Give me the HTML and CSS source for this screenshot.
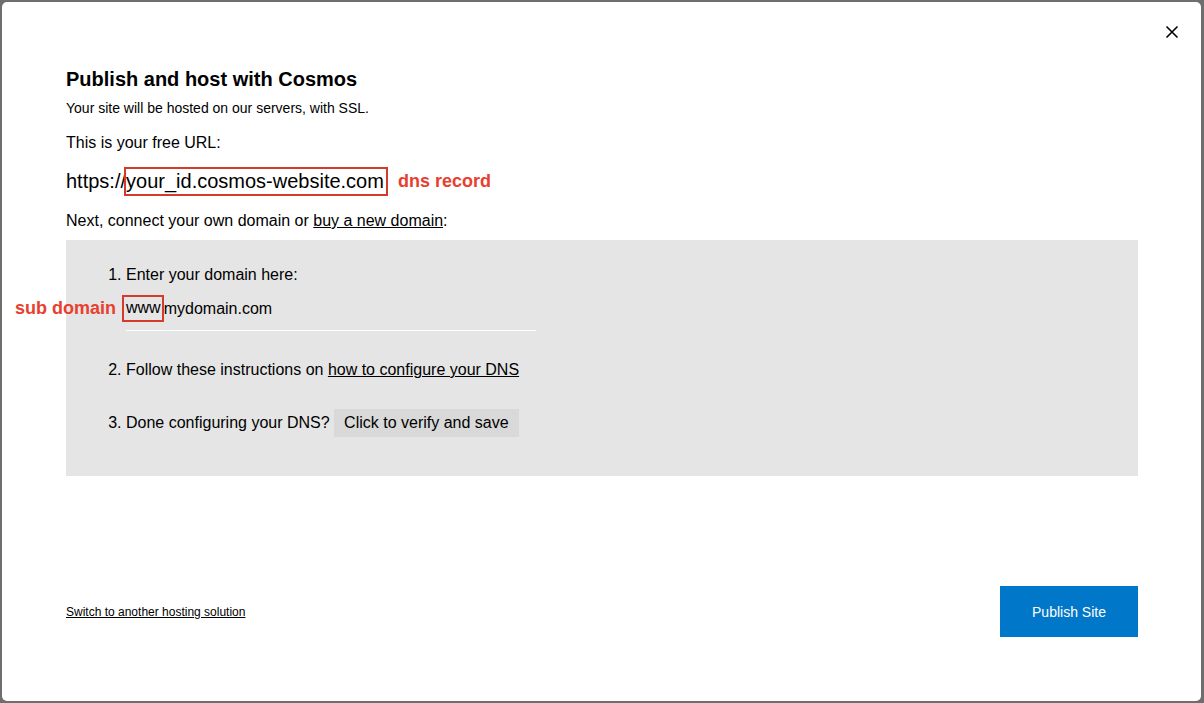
FILE: index.html
```html
<!DOCTYPE html>
<html lang="en">
<head>
  <meta charset="UTF-8" />
  <meta name="viewport" content="width=device-width, initial-scale=1.0"/>
  <title>Publish and host with Cosmos</title>
  <link rel="stylesheet" href="styles.css">
</head>
<body>
  <div class="dialog">
    <div class="close-btn" title="Close">
      <svg width="14" height="14" viewBox="0 0 14 14">
        <path d="M1.5 1.5 L12.5 12.5 M12.5 1.5 L1.5 12.5" stroke="#000" stroke-width="1.6" fill="none"/>
      </svg>
    </div>

    <div class="content">
      <h1 class="title">Publish and host with Cosmos</h1>
      <p class="subtitle">Your site will be hosted on our servers, with SSL.</p>
      <p class="label">This is your free URL:</p>
      <div class="url-row">https://<span class="mark url-mark">your_id.cosmos-website.com</span><span class="note">dns record</span></div>
      <p class="label next">Next, connect your own domain or <a href="#">buy a new domain</a>:</p>

      <div class="panel">
        <span class="note sub-note">sub domain</span>
        <ol class="steps">
          <li class="step-domain">
            Enter your domain here:
            <div class="domain-input"><span class="mark www-mark">www</span>mydomain.com</div>
          </li>
          <li class="step-dns">Follow these instructions on <a href="#">how to configure your DNS</a></li>
          <li class="step-verify">Done configuring your DNS? <span class="verify-btn">Click to verify and save</span></li>
        </ol>
      </div>
    </div>

    <div class="footer">
      <a href="#" class="switch-link">Switch to another hosting solution</a>
      <div class="publish-btn">Publish Site</div>
    </div>
  </div>
</body>
</html>
```

FILE: styles.css
```css
body {
  margin: 0;
  height: 703px;
  overflow: hidden;
  background-color: #6e6e6e;
  font-family: "Liberation Sans", Arial, sans-serif;
  color: #000;
}

a {
  color: #000;
  text-decoration: underline;
}

.dialog {
  position: relative;
  box-sizing: border-box;
  margin: 2px 3px 2px 2px;
  height: 699px;
  background-color: #fff;
  border-radius: 5px;
  padding: 66px 63px 0 64px;
  display: flex;
  flex-direction: column;
}

.close-btn {
  position: absolute;
  top: 23px;
  right: 22px;
  width: 14px;
  height: 14px;
  cursor: pointer;
}

.close-btn svg {
  display: block;
}

.title {
  margin: 0;
  font-size: 20px;
  line-height: 23px;
  font-weight: bold;
}

.subtitle {
  margin: 9px 0 0;
  font-size: 14px;
  line-height: 16px;
}

.label {
  margin: 17px 0 0;
  font-size: 16px;
  line-height: 20px;
}

.url-row {
  margin-top: 14px;
  font-size: 20px;
  line-height: 25px;
  display: flex;
  align-items: center;
}

.mark {
  border: 2px solid #d63a2c;
}

.url-mark {
  display: inline-block;
  margin-left: -2px;
  padding: 0 2px 0 0;
}

.note {
  color: #e8402e;
  font-weight: bold;
  font-size: 18px;
}

.url-row .note {
  margin-left: 10px;
}

.label.next {
  margin-top: 15px;
}

.panel {
  position: relative;
  box-sizing: border-box;
  margin-top: 9px;
  height: 236px;
  padding: 25px 20px 0;
  background-color: #e5e5e5;
}

.sub-note {
  position: absolute;
  left: -51px;
  top: 57px;
  line-height: 22px;
}

.steps {
  margin: 0;
  padding-left: 40px;
  font-size: 16px;
  line-height: 20px;
}

.domain-input {
  width: 410px;
  margin-top: 10px;
  padding-bottom: 8px;
  border-bottom: 1px solid #fff;
  display: flex;
  align-items: center;
}

.www-mark {
  margin-left: -4px;
  padding: 1px 1px 2px 2px;
  line-height: 20px;
}

.step-dns {
  margin-top: 29px;
}

.step-verify {
  margin-top: 29px;
}

.verify-btn {
  display: inline-block;
  padding: 5px 10px;
  line-height: 18px;
  background-color: #d9d9d9;
  cursor: pointer;
}

.footer {
  margin-top: auto;
  padding-bottom: 64px;
  display: flex;
  justify-content: space-between;
  align-items: center;
}

.switch-link {
  font-size: 12px;
  line-height: 14px;
}

.publish-btn {
  width: 138px;
  height: 51px;
  display: flex;
  align-items: center;
  justify-content: center;
  background-color: #0077c8;
  color: #fff;
  font-size: 14px;
  cursor: pointer;
}
```
